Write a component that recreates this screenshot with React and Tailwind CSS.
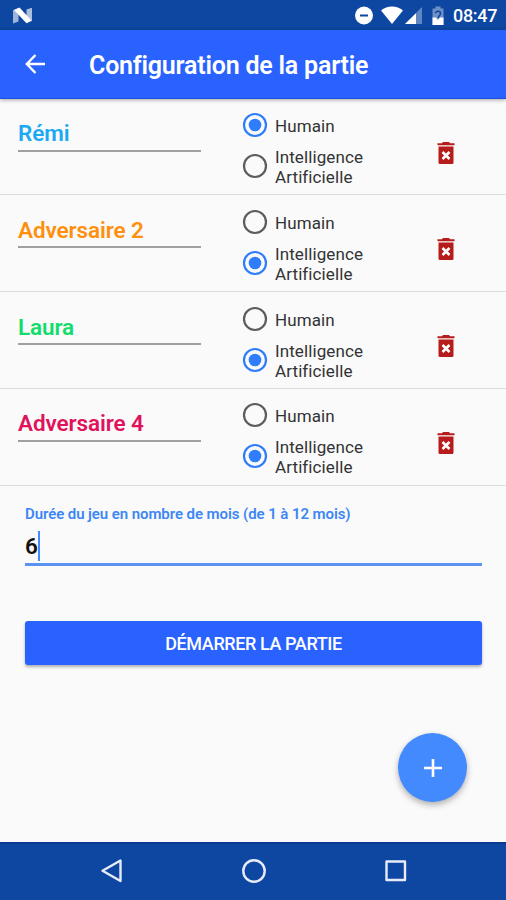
import { useState } from 'react'

const initialPlayers = [
  { id: 1, name: 'Rémi', color: 'text-[#1ba9f5]', type: 'human' },
  { id: 2, name: 'Adversaire 2', color: 'text-[#ff8f0f]', type: 'ai' },
  { id: 3, name: 'Laura', color: 'text-[#12dd6c]', type: 'ai' },
  { id: 4, name: 'Adversaire 4', color: 'text-[#e0125c]', type: 'ai' },
]

function StatusBar() {
  return (
    <div className="flex h-[30px] shrink-0 items-center bg-[#0d47a1] pl-[13px] pr-[9px]">
      <svg width="20" height="18" viewBox="0 0 20 18">
        <path d="M0 4.2 5.5 2V15.5L0 17.500Z" fill="#fff" opacity="0.6" />
        <path d="M13.5 3.5 19 1.8V15L13.5 17Z" fill="#fff" opacity="0.65" />
        <path d="M1 4 6.5 1.5 18.500 14.500 13.500 17.200Z" fill="#fff" />
      </svg>
      <div className="ml-auto flex items-center">
        <svg width="92" height="20" viewBox="0 0 92 20">
          <circle cx="10" cy="10.5" r="9" fill="#fff" />
          <path d="M6 10.5h8" stroke="#0d47a1" strokeWidth="2" />
          <path d="M27 5.5C33 .2 43 .2 49 5.5L38 19Z" fill="#fff" />
          <path d="M68 2V19H51Z" fill="#fff" opacity="0.35" />
          <path d="M62 8.2V19H51Z" fill="#fff" />
          <path d="M78.5 3.5h3v-2h5v2h3V20h-11Z" fill="#fff" opacity="0.4" />
          <path d="M78.5 12.5h3.5l2 2.5 2-2.5h3.5V20h-11Z" fill="#fff" />
          <path d="M81.5 8.2C82 5.5 86.5 5.5 86.5 8.5C86.5 10.5 84.3 10.5 84.3 13" fill="none" stroke="#0d47a1" strokeWidth="1.5" />
        </svg>
        <span className="ml-[7px] w-[44px] translate-y-px text-[18px] leading-none font-medium tracking-[-0.3px] text-white">08:47</span>
      </div>
    </div>
  )
}

function Header() {
  return (
    <header className="z-10 flex h-[68.5px] shrink-0 items-center border-b border-[#1a4fe0] bg-[#2962ff] pl-[25px] text-white shadow-[0_1px_4px_rgba(0,0,0,0.35)]">
      <svg width="21" height="20" viewBox="0 0 21 20" fill="none" stroke="currentColor" strokeWidth="2.4">
        <path d="M20 10H2M10.5 1 1.8 10l8.7 9" />
      </svg>
      <h1 className="mt-[3px] ml-[43px] text-[25px] leading-none font-semibold tracking-[-0.2px] whitespace-nowrap">Configuration de la partie</h1>
    </header>
  )
}

function Radio({ checked, label, onSelect }) {
  return (
    <button type="button" role="radio" aria-checked={checked} onClick={onSelect} className="flex items-center gap-[7px] text-left">
      <svg width="26" height="26" viewBox="0 0 26 26" className={checked ? 'shrink-0 text-[#2f7dfb]' : 'shrink-0 text-[#5c5c5c]'}>
        <circle cx="13" cy="13" r="11" fill="none" stroke="currentColor" strokeWidth="2.2" />
        {checked && <circle cx="13" cy="13" r="6.3" fill="currentColor" />}
      </svg>
      <span className="w-[100px] translate-y-px text-[17px] leading-5 tracking-[0.1px] text-[#333]">{label}</span>
    </button>
  )
}

function TrashIcon() {
  return (
    <svg width="18" height="24" viewBox="0 0 18 24">
      <path d="M0.5 2.2H5L6 1h6l1 1.2h4.5V4.2H.5Z" fill="#b71c1c" />
      <path d="M1.5 5.5h15V21.5q0 1.5-1.5 1.5h-12q-1.5 0-1.5-1.5Z" fill="#b71c1c" />
      <path d="m5.5 11 7 7M12.5 11l-7 7" stroke="#fff" strokeWidth="2.6" />
    </svg>
  )
}

function PlayerRow({ player, onTypeChange, onDelete }) {
  return (
    <div className="grid h-[96.8px] grid-cols-[224px_1fr_53px] border-b-[1.5px] border-[#dcdcdc] pl-[18px]">
      <div className="mt-[19.6px] h-[33.5px] w-[183px] border-b-2 border-[#a0a0a0]">
        <span className={`block text-[22.5px] leading-[30px] font-semibold tracking-[-0.1px] ${player.color}`}>{player.name}</span>
      </div>
      <div className="flex flex-col pt-[13.6px]" role="radiogroup">
        <Radio label="Humain" checked={player.type === 'human'} onSelect={() => onTypeChange(player.id, 'human')} />
        <div className="mt-[8px]">
          <Radio label="Intelligence Artificielle" checked={player.type === 'ai'} onSelect={() => onTypeChange(player.id, 'ai')} />
        </div>
      </div>
      <button type="button" aria-label="Supprimer" onClick={() => onDelete(player.id)} className="mt-[42px] h-6 w-[18px] -translate-x-4">
        <TrashIcon />
      </button>
    </div>
  )
}

function NavBar() {
  return (
    <nav className="flex h-[58.5px] shrink-0 items-center justify-between border-t-2 border-[#0a3a8f] bg-[#0d47a1] px-[99px] pb-px">
      <svg width="26" height="26" viewBox="0 0 26 26" fill="none" stroke="#e8ecfa" strokeWidth="2.4" strokeLinejoin="round">
        <path d="M21.5 2.5V23L3.5 12.8Z" />
      </svg>
      <svg width="26" height="26" viewBox="0 0 26 26" fill="none" stroke="#e8ecfa" strokeWidth="2.4">
        <circle cx="12" cy="13" r="10.7" />
      </svg>
      <svg width="22" height="26" viewBox="0 0 22 26" fill="none" stroke="#e8ecfa" strokeWidth="2.4" strokeLinejoin="round">
        <path d="M1.5 3.5h18.5v18.5H1.5Z" />
      </svg>
    </nav>
  )
}

export default function App() {
  const [players, setPlayers] = useState(initialPlayers)

  const changeType = (id, type) => {
    setPlayers((list) => list.map((p) => (p.id === id ? { ...p, type } : p)))
  }

  const deletePlayer = (id) => {
    setPlayers((list) => list.filter((p) => p.id !== id))
  }

  const addPlayer = () => {
    setPlayers((list) => [...list, { id: Date.now(), name: `Adversaire ${list.length + 1}`, color: 'text-[#7c4dff]', type: 'ai' }])
  }

  return (
    <div className="relative flex h-[900px] w-[506px] flex-col overflow-hidden bg-[#fafafa] font-['Roboto',sans-serif]">
      <StatusBar />
      <Header />

      <main className="min-h-0 flex-1 overflow-hidden">
        {players.map((player) => (
          <PlayerRow key={player.id} player={player} onTypeChange={changeType} onDelete={deletePlayer} />
        ))}

        <div className="pt-[18px] pr-6 pl-[25px]">
          <div className="text-[15px] leading-5 font-semibold tracking-[-0.08px] text-[#3d86f5]">Durée du jeu en nombre de mois (de 1 à 12 mois)</div>
          <div className="mt-[6px] flex h-[36px] items-start border-b-[3px] border-[#5b93f3]">
            <span className="text-[22.5px] leading-[33px] font-semibold text-[#111]">6</span>
            <span className="mt-px h-[30px] w-[2px] bg-[#448aff]" />
          </div>
          <button type="button" className="mt-[55px] h-[44px] w-full rounded-[3px] bg-[#2962ff] pt-[2px] text-[18px] font-medium tracking-[-0.4px] text-white shadow-[0_2px_3px_rgba(0,0,0,0.3)]">
            DÉMARRER LA PARTIE
          </button>
        </div>
      </main>

      <button type="button" aria-label="Ajouter" onClick={addPlayer} className="absolute right-[39px] bottom-[98px] flex size-[69px] items-center justify-center rounded-full bg-[#448aff] shadow-[0_3px_6px_rgba(0,0,0,0.3)]">
        <svg width="18" height="18" viewBox="0 0 18 18" stroke="#fff" strokeWidth="2.6">
          <path d="M9 0v18M0 9h18" />
        </svg>
      </button>

      <NavBar />
    </div>
  )
}
